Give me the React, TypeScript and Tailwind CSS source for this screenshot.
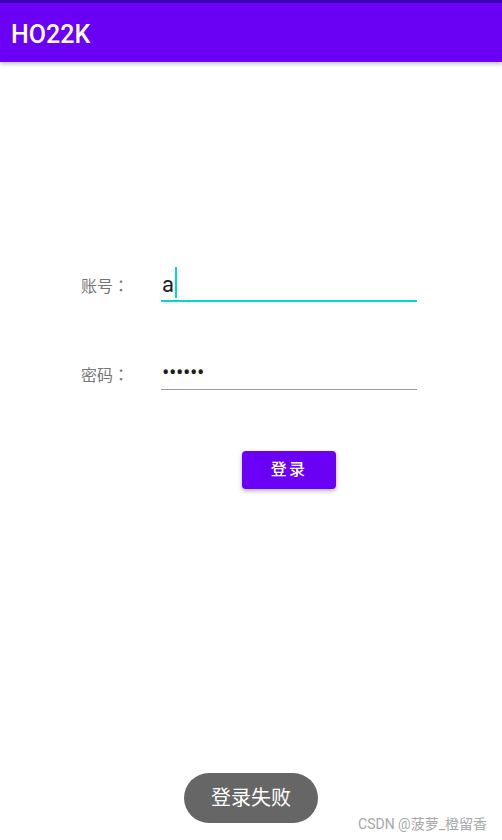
import React from "react";

export default function App() {
  const font = { fontFamily: "Roboto, 'Noto Sans CJK SC', sans-serif" };
  return (
    <div className="relative w-[502px] h-[840px] bg-white overflow-hidden" style={font}>
      <div className="h-[3px] bg-[#3c00b6]" />
      <div className="relative z-10 h-[59px] bg-[#6a00f4] flex items-center pt-[3px] pl-[11px] shadow-[0_2px_4px_rgba(0,0,0,0.25)]">
        <span className="text-[25px] leading-none font-medium text-white font-['Roboto',sans-serif]">HO22K</span>
      </div>

      <div className="pt-[204px] pl-[81px]">
        <div className="flex">
          <div className="w-[80px] mt-[7px] text-[16px] leading-[24px] text-[#777777]">
            账号<span className="font-['Noto_Sans_CJK_JP',sans-serif]">：</span>
          </div>
          <div className="w-[256px] h-[36px] border-b-2 border-[#03dac5] flex items-start pl-[1px]">
            <span className="mt-[6px] text-[22px] leading-[26px] text-[#1e1e1e] font-['Roboto',sans-serif]">a</span>
            <span className="mt-[1px] ml-[1px] w-[2px] h-[31px] bg-[#03dac5]" />
          </div>
        </div>

        <div className="flex mt-[52px]">
          <div className="w-[80px] mt-[8px] text-[16px] leading-[24px] text-[#777777]">
            密码<span className="font-['Noto_Sans_CJK_JP',sans-serif]">：</span>
          </div>
          <div className="w-[256px] h-[36px] border-b border-[#9a9a9a] flex items-start pl-[1px]">
            <span className="mt-[6px] text-[22px] leading-[26px] text-[#1e1e1e] tracking-[-0.02em] font-['Roboto',sans-serif]">••••••</span>
          </div>
        </div>

        <div className="flex">
          <div className="w-[80px]" />
          <div className="w-[256px] flex justify-center mt-[61px]">
            <button className="w-[94px] h-[38px] rounded-[4px] bg-[#6a00f4] text-white text-[16px] font-medium tracking-[0.14em] shadow-[0_2px_4px_rgba(0,0,0,0.3)]">
              登录
            </button>
          </div>
        </div>
      </div>

      <div className="absolute left-[184px] bottom-[17px] w-[134px] h-[50px] rounded-full bg-[#666666] flex items-center justify-center text-white text-[20px]">
        登录失败
      </div>
      <div className="absolute right-[15px] bottom-[7px] text-[14px] leading-[18px] text-[#a8a8a8]">
        CSDN @菠萝_橙留香
      </div>
    </div>
  );
}
